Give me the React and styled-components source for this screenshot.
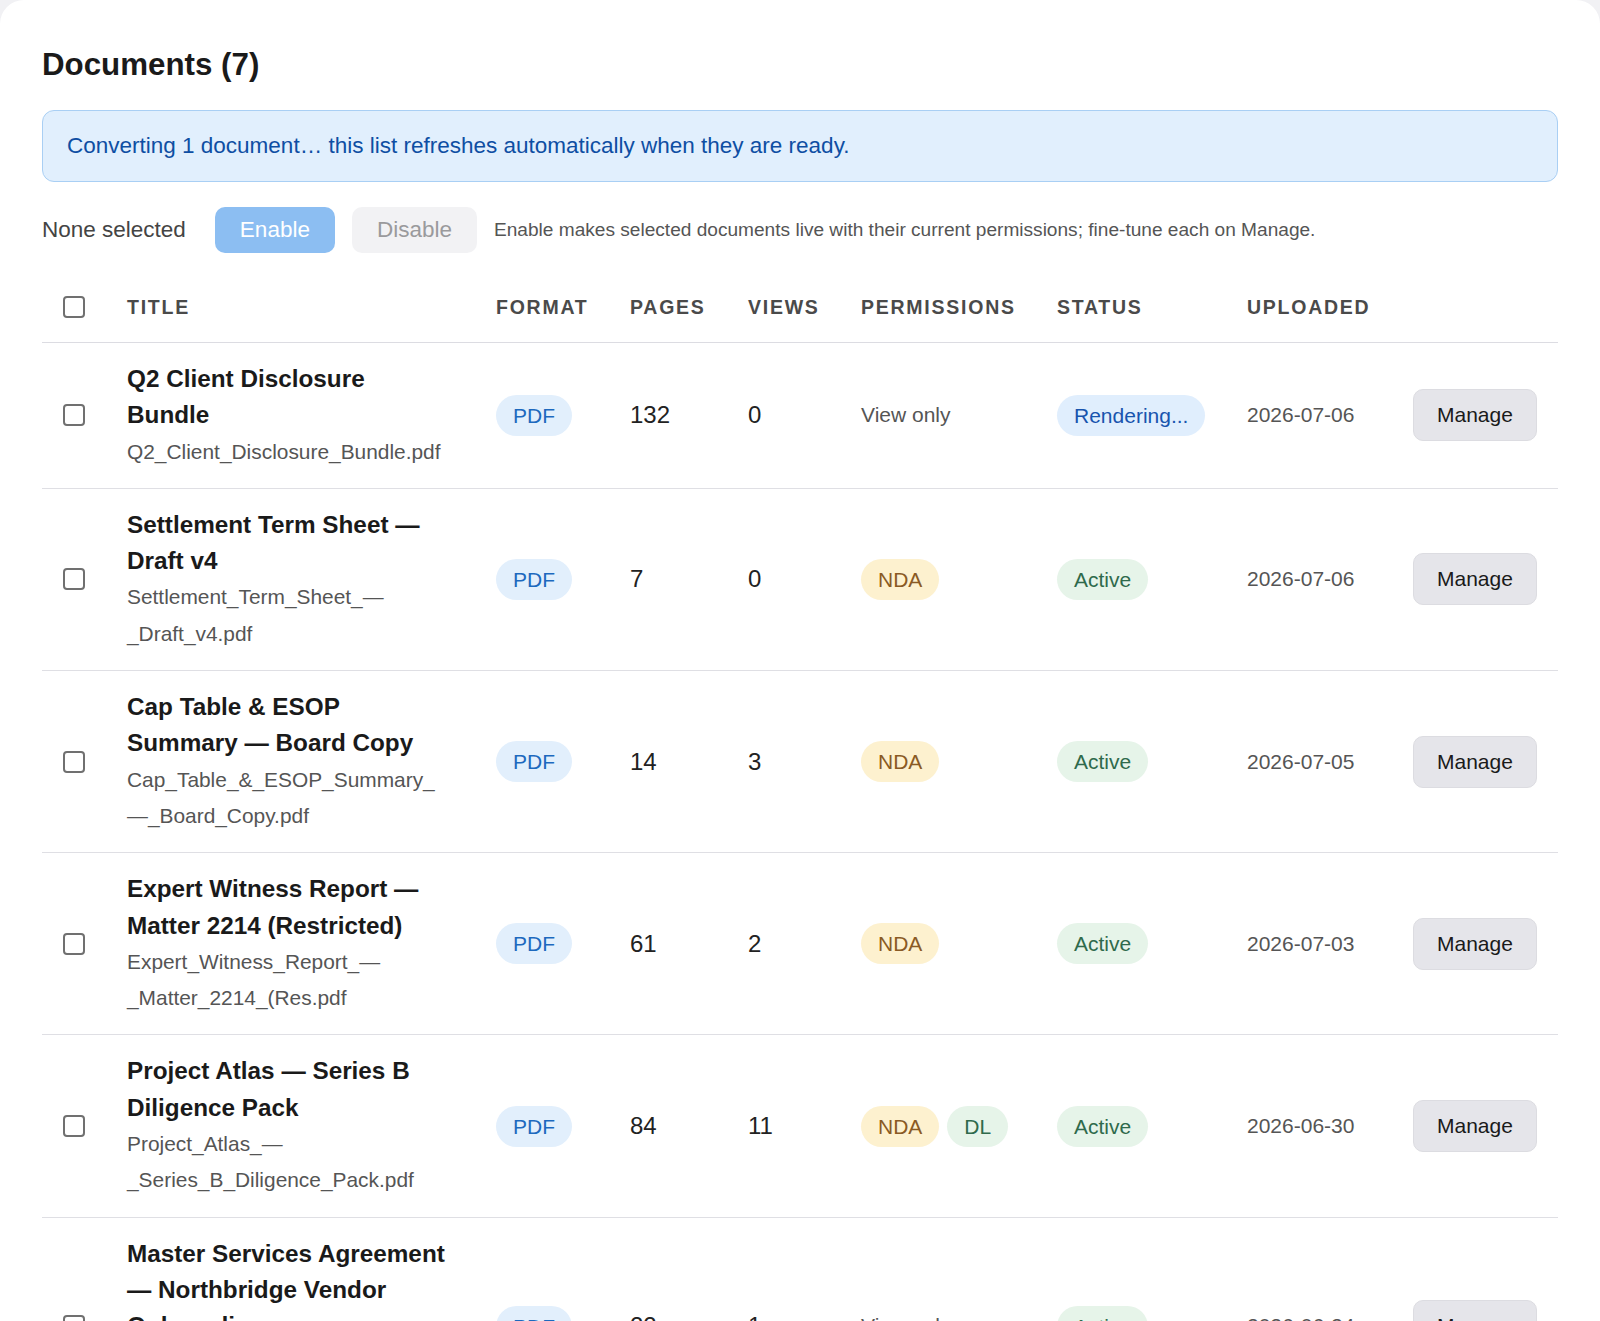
import React from "react";
import styled, { createGlobalStyle } from "styled-components";

const Global = createGlobalStyle`
  html, body { margin: 0; padding: 0; background: #f1f1f4; }
  body { font-family: "Liberation Sans", Arial, sans-serif; color: #1a1a1a; }
  * { box-sizing: border-box; }
`;

const Card = styled.div`
  background: #ffffff;
  border-radius: 24px;
  padding: 45px 42px 40px;
  min-height: 1321px;
`;

const Heading = styled.h1`
  margin: 0 0 25px;
  font-size: 31.3px;
  line-height: 40px;
  font-weight: 700;
  color: #1a1a1a;
`;

const Alert = styled.div`
  background: #e1effd;
  border: 1px solid #a9cff4;
  border-radius: 12px;
  padding: 19px 24px;
  font-size: 22.5px;
  line-height: 32px;
  color: #0e4ea3;
`;

const Toolbar = styled.div`
  display: flex;
  align-items: center;
  gap: 17px;
  margin-top: 25px;
`;

const SelectedLabel = styled.span`
  font-size: 22.5px;
  color: #444;
  margin-right: 12px;
`;

const ToolButton = styled.button`
  font-family: inherit;
  font-size: 22.5px;
  line-height: 28px;
  height: 46px;
  padding: 0 25px;
  border: none;
  border-radius: 10px;
  background: ${(p) => (p.$primary ? "#8cbef2" : "#f2f2f4")};
  color: ${(p) => (p.$primary ? "#ffffff" : "#9a9a9c")};
  cursor: default;
`;

const Helper = styled.span`
  font-size: 19.1px;
  color: #555;
`;

const Table = styled.table`
  width: 100%;
  margin-top: 19px;
  border-collapse: collapse;
  table-layout: fixed;
`;

const HeadCell = styled.th`
  text-align: left;
  padding: 21px 21px;
  font-size: 19.5px;
  line-height: 28px;
  font-weight: 700;
  letter-spacing: 0.09em;
  text-transform: uppercase;
  color: #4a4a4a;
  border-bottom: 1px solid #dcdce2;
  vertical-align: middle;
`;

const Row = styled.tr`
  border-bottom: 1px solid #dfdfe4;
`;

const Cell = styled.td`
  padding: 18px 21px;
  vertical-align: middle;
  font-size: 21px;
  color: ${(p) => p.$color || "#555"};
`;

const NumCell = styled(Cell)`
  font-size: 24px;
  color: #222;
`;

const Check = styled.input.attrs({ type: "checkbox" })`
  appearance: none;
  -webkit-appearance: none;
  display: block;
  width: 22px;
  height: 22px;
  margin: 0;
  border: 2px solid #707070;
  border-radius: 4px;
  background: #fff;
`;

const TitleBlock = styled.div`
  max-width: 322px;
`;

const DocTitle = styled.div`
  font-size: 24.3px;
  line-height: 36.3px;
  font-weight: 700;
  color: #1a1a1a;
`;

const FileName = styled.div`
  font-size: 20.9px;
  line-height: 36.3px;
  color: #555;
`;

const tones = {
  blue: { bg: "#e2effc", fg: "#1d69be" },
  amber: { bg: "#fdf1cf", fg: "#8a5a24" },
  green: { bg: "#e6f4e9", fg: "#2f6a4c" },
  render: { bg: "#e0eefd", fg: "#1854ae" },
};

const Pill = styled.span`
  display: inline-block;
  font-size: 21px;
  line-height: 29px;
  padding: 6px 17px;
  border-radius: 999px;
  background: ${(p) => tones[p.$tone].bg};
  color: ${(p) => tones[p.$tone].fg};
  white-space: nowrap;
`;

const PillGroup = styled.div`
  display: flex;
  gap: 8px;
`;

const ManageButton = styled.button`
  font-family: inherit;
  font-size: 21px;
  line-height: 28px;
  height: 52px;
  padding: 0 23px;
  border: 1px solid #dcdce1;
  border-radius: 10px;
  background: #e5e5ea;
  color: #1a1a1a;
  cursor: default;
`;

const docs = [
  {
    title: "Q2 Client Disclosure Bundle",
    file: "Q2_Client_Disclosure_Bundle.pdf",
    pages: 132,
    views: 0,
    perms: null,
    status: "Rendering...",
    date: "2026-07-06",
  },
  {
    title: "Settlement Term Sheet — Draft v4",
    file: "Settlement_Term_Sheet_—_Draft_v4.pdf",
    pages: 7,
    views: 0,
    perms: ["NDA"],
    status: "Active",
    date: "2026-07-06",
  },
  {
    title: "Cap Table & ESOP Summary — Board Copy",
    file: "Cap_Table_&_ESOP_Summary_—_Board_Copy.pdf",
    pages: 14,
    views: 3,
    perms: ["NDA"],
    status: "Active",
    date: "2026-07-05",
  },
  {
    title: "Expert Witness Report — Matter 2214 (Restricted)",
    file: "Expert_Witness_Report_—_Matter_2214_(Res.pdf",
    pages: 61,
    views: 2,
    perms: ["NDA"],
    status: "Active",
    date: "2026-07-03",
  },
  {
    title: "Project Atlas — Series B Diligence Pack",
    file: "Project_Atlas_—_Series_B_Diligence_Pack.pdf",
    pages: 84,
    views: 11,
    perms: ["NDA", "DL"],
    status: "Active",
    date: "2026-06-30",
  },
  {
    title: "Master Services Agreement — Northbridge Vendor Onboarding",
    file: "Master_Services_Agreement_—_Northbridge_Ve.pdf",
    pages: 22,
    views: 1,
    perms: null,
    status: "Active",
    date: "2026-06-24",
  },
  {
    title: "Board Minutes — March 2026",
    file: "Board_Minutes_—_March_2026.pdf",
    pages: 9,
    views: 5,
    perms: ["NDA"],
    status: "Active",
    date: "2026-06-18",
  },
];

const widths = [64, 369, 134, 118, 113, 196, 190, 166, 166];

export default function App() {
  return (
    <>
      <Global />
      <Card>
        <Heading>Documents (7)</Heading>
        <Alert>
          Converting 1 document… this list refreshes automatically when they are ready.
        </Alert>
        <Toolbar>
          <SelectedLabel>None selected</SelectedLabel>
          <ToolButton $primary>Enable</ToolButton>
          <ToolButton>Disable</ToolButton>
          <Helper>
            Enable makes selected documents live with their current permissions; fine-tune each on Manage.
          </Helper>
        </Toolbar>
        <Table>
          <colgroup>
            {widths.map((w, i) => (
              <col key={i} style={{ width: w }} />
            ))}
          </colgroup>
          <thead>
            <tr>
              <HeadCell>
                <Check />
              </HeadCell>
              <HeadCell>Title</HeadCell>
              <HeadCell>Format</HeadCell>
              <HeadCell>Pages</HeadCell>
              <HeadCell>Views</HeadCell>
              <HeadCell>Permissions</HeadCell>
              <HeadCell>Status</HeadCell>
              <HeadCell>Uploaded</HeadCell>
              <HeadCell />
            </tr>
          </thead>
          <tbody>
            {docs.map((d) => (
              <Row key={d.file}>
                <Cell>
                  <Check />
                </Cell>
                <Cell>
                  <TitleBlock>
                    <DocTitle>{d.title}</DocTitle>
                    <FileName>{d.file}</FileName>
                  </TitleBlock>
                </Cell>
                <Cell>
                  <Pill $tone="blue">PDF</Pill>
                </Cell>
                <NumCell>{d.pages}</NumCell>
                <NumCell>{d.views}</NumCell>
                <Cell>
                  {d.perms ? (
                    <PillGroup>
                      {d.perms.map((p) => (
                        <Pill key={p} $tone={p === "NDA" ? "amber" : "green"}>
                          {p}
                        </Pill>
                      ))}
                    </PillGroup>
                  ) : (
                    "View only"
                  )}
                </Cell>
                <Cell>
                  <Pill $tone={d.status === "Active" ? "green" : "render"}>{d.status}</Pill>
                </Cell>
                <Cell>{d.date}</Cell>
                <Cell>
                  <ManageButton>Manage</ManageButton>
                </Cell>
              </Row>
            ))}
          </tbody>
        </Table>
      </Card>
    </>
  );
}
